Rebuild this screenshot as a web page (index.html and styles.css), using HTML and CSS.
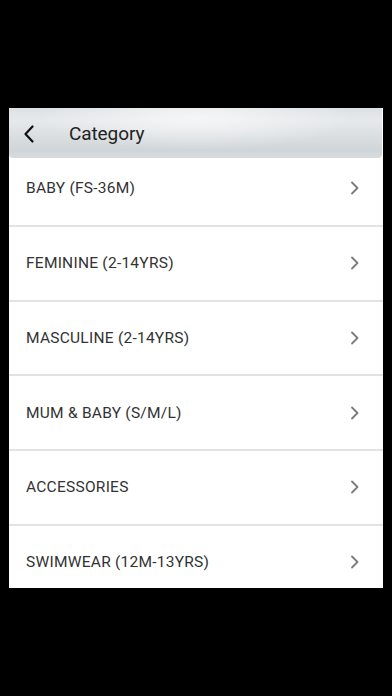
FILE: index.html
```html
<!DOCTYPE html>
<html>
<head>
<meta charset="utf-8">
<link rel="stylesheet" href="styles.css">
</head>
<body>
<div class="screen">
  <div class="panel">
    <div class="header">
      <svg class="back" width="12" height="18" viewBox="0 0 12 18"><path d="M9.5 1.5 L2.5 9 L9.5 16.5" fill="none" stroke="#111" stroke-width="2.2" stroke-linecap="round" stroke-linejoin="round"/></svg>
      <span class="title">Category</span>
    </div>
    <ul class="list">
      <li class="row"><span class="label">BABY (FS-36M)</span><svg class="chev" width="10" height="14" viewBox="0 0 10 14"><path d="M2 1.5 L7.5 7 L2 12.5" fill="none" stroke="#7a7a7a" stroke-width="1.8" stroke-linecap="round" stroke-linejoin="round"/></svg></li>
      <li class="row"><span class="label">FEMININE (2-14YRS)</span><svg class="chev" width="10" height="14" viewBox="0 0 10 14"><path d="M2 1.5 L7.5 7 L2 12.5" fill="none" stroke="#7a7a7a" stroke-width="1.8" stroke-linecap="round" stroke-linejoin="round"/></svg></li>
      <li class="row"><span class="label">MASCULINE (2-14YRS)</span><svg class="chev" width="10" height="14" viewBox="0 0 10 14"><path d="M2 1.5 L7.5 7 L2 12.5" fill="none" stroke="#7a7a7a" stroke-width="1.8" stroke-linecap="round" stroke-linejoin="round"/></svg></li>
      <li class="row"><span class="label">MUM &amp; BABY (S/M/L)</span><svg class="chev" width="10" height="14" viewBox="0 0 10 14"><path d="M2 1.5 L7.5 7 L2 12.5" fill="none" stroke="#7a7a7a" stroke-width="1.8" stroke-linecap="round" stroke-linejoin="round"/></svg></li>
      <li class="row"><span class="label">ACCESSORIES</span><svg class="chev" width="10" height="14" viewBox="0 0 10 14"><path d="M2 1.5 L7.5 7 L2 12.5" fill="none" stroke="#7a7a7a" stroke-width="1.8" stroke-linecap="round" stroke-linejoin="round"/></svg></li>
      <li class="row"><span class="label">SWIMWEAR (12M-13YRS)</span><svg class="chev" width="10" height="14" viewBox="0 0 10 14"><path d="M2 1.5 L7.5 7 L2 12.5" fill="none" stroke="#7a7a7a" stroke-width="1.8" stroke-linecap="round" stroke-linejoin="round"/></svg></li>
    </ul>
  </div>
</div>
</body>
</html>
```
FILE: styles.css
```css
html, body {
  margin: 0;
  padding: 0;
  background: #000;
}
.screen {
  width: 392px;
  height: 696px;
  background: #000;
  padding-top: 108px;
  box-sizing: border-box;
  font-family: Roboto, "Liberation Sans", sans-serif;
}
.panel {
  margin-left: 9px;
  width: 374px;
  height: 480px;
  background: #fff;
  overflow: hidden;
}
.header {
  position: relative;
  z-index: 1;
  height: 50px;
  width: 373px;
  box-sizing: border-box;
  display: flex;
  align-items: center;
  padding-left: 14px;
  border-radius: 0 0 4px 4px;
  background:
    radial-gradient(ellipse 60% 90% at 50% 20%, rgba(246,247,248,0.9), rgba(246,247,248,0) 70%),
    linear-gradient(to bottom, #dde1e3 0%, #e6e9eb 25%, #d9dde0 60%, #cfd5d8 85%, #d8dcdf 100%);
}
.back {
  display: block;
  margin-top: 1px;
}
.title {
  margin-left: 34px;
  font-size: 19px;
  color: #222;
  letter-spacing: -0.1px;
}
.list {
  list-style: none;
  margin: -6px 0 0 0;
  padding: 0;
}
.row {
  height: 74.75px;
  box-sizing: border-box;
  border-bottom: 2px solid #e2e2e2;
  display: flex;
  align-items: center;
  justify-content: space-between;
  padding: 0 23px 0 17px;
}
.label {
  font-size: 15.5px;
  color: #333;
  letter-spacing: 0.25px;
}
.chev {
  display: block;
}
```
